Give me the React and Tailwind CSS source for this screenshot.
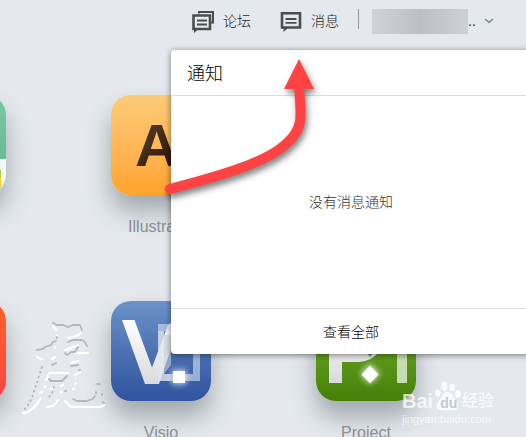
import React from 'react';

function ForumIcon() {
  return (
    <svg className="size-6" viewBox="0 0 24 24" fill="none" stroke="#4d4d4d" aria-hidden="true">
      <path d="M8 4.500V3h14v10.500h-2.500" strokeWidth="2" />
      <path d="M2.500 6.500h16.500v13.500H2.500z" strokeWidth="2.600" />
      <path d="M6 11.500h10M6 15.500h10" strokeWidth="1.800" />
      <path d="M3 20v4L7 20.500z" fill="#4d4d4d" stroke="none" />
    </svg>
  );
}

function MessageIcon() {
  return (
    <svg className="size-6" viewBox="0 0 24 24" fill="none" stroke="#4d4d4d" aria-hidden="true">
      <path d="M3 4.300h18v14.200H3z" strokeWidth="2.600" />
      <path d="M6.500 10h11M6.500 13.800h11" strokeWidth="1.800" />
      <path d="M4.500 18v5L9 19z" fill="#4d4d4d" stroke="none" />
    </svg>
  );
}

function NavLink({ icon, children }) {
  return (
    <a href="#" className="flex items-center gap-2 text-sm font-light text-[#222]">
      {icon}
      <span>{children}</span>
    </a>
  );
}

function Header() {
  return (
    <header className="flex h-[42px] items-center justify-end pr-8">
      <nav className="flex items-center gap-7">
        <NavLink icon={<ForumIcon />}>论坛</NavLink>
        <NavLink icon={<MessageIcon />}>消息</NavLink>
      </nav>
      <span className="mb-1 ml-[19px] mr-[13px] h-5 w-px bg-[#999]" />
      <button type="button" aria-label="账户" className="flex items-center">
        <span className="h-[25px] w-24 bg-linear-to-r from-[#d0d3d7] via-[#bcc0c4] to-[#cdd0d5]" />
        <span className="w-4 text-left text-sm leading-5 text-[#222]">..</span>
        <svg className="h-[6px] w-[10px]" viewBox="0 0 10 6" fill="none" stroke="#888e8e" strokeWidth="1.6" aria-hidden="true">
          <path d="M1 1l4 3.400L9 1" />
        </svg>
      </button>
    </header>
  );
}

function AppTile({ name, label, tone, children }) {
  return (
    <a href="#" aria-label={label} className="flex flex-col items-center gap-5">
      <span className={`block size-[100px] overflow-hidden rounded-[20px] bg-linear-to-b shadow-[0_16px_24px_rgba(70,78,84,0.42)] ${tone}`}>
        <svg className="block size-full" viewBox="0 0 100 100" aria-hidden="true">{children}</svg>
      </span>
      <span className="min-h-6 text-base leading-6 text-[#8b8d91]">{name}</span>
    </a>
  );
}

function AppGrid() {
  return (
    <main className="-ml-[94px] grid grid-cols-[repeat(3,100px)] gap-x-[105px] gap-y-[62px] pt-[53px]">
      <AppTile label="Numbers" tone="from-[#79c8a5] to-[#5bb589]">
        <rect y="64" width="100" height="36" fill="#f5f7f7" />
        <rect x="86" y="75" width="9" height="8" fill="#a6cf38" />
        <rect x="86" y="83" width="9" height="10" fill="#ffc425" />
      </AppTile>
      <AppTile name="Illustrator" tone="from-[#fdcb78] to-[#ffa32b]">
        <defs>
          <linearGradient id="brown" x1="0" y1="0" x2="1" y2="1">
            <stop offset="0.1" stopColor="#5b4130" />
            <stop offset="0.7" stopColor="#2c1604" />
          </linearGradient>
        </defs>
        <text x="24" y="71" fontSize="60" fontWeight="bold" fill="url(#brown)">Ai</text>
      </AppTile>
      <AppTile label="Photos" tone="from-[#7ea4d9] to-[#4468ad]" />
      <AppTile label="Keynote" tone="from-[#ff6126] to-[#ff4243]" />
      <AppTile name="Visio" tone="from-[#6c92c9] to-[#2f539e]">
        <defs>
          <linearGradient id="silver" x1="0" y1="0" x2="0" y2="1">
            <stop offset="0" stopColor="#fff" />
            <stop offset="1" stopColor="#dadada" />
          </linearGradient>
          <filter id="glow" x="-1" y="-1" width="3" height="3">
            <feGaussianBlur stdDeviation="3" />
          </filter>
        </defs>
        <path d="M11 19h12.500L41 66.500 57 24l7-5v17L48 83H34z" fill="url(#silver)" />
        <path d="M47 23h42v57H47zM53 30v43h29V30z" fill="#d9e2f2" fillOpacity="0.6" fillRule="evenodd" />
        <path d="M47 30v50h12v-7h-6V30z" fill="#e5e8ee" fillOpacity="0.5" />
        <path d="M53 34h7v30l-7 9z" fill="#c9d0dc" fillOpacity="0.6" />
        <rect x="61" y="69" width="14" height="14" fill="#fff" filter="url(#glow)" opacity="0.8" />
        <rect x="62" y="70" width="12" height="12" fill="#fff" />
      </AppTile>
      <AppTile name="Project" tone="from-[#79b82d] to-[#467f08]">
        <path d="M13 19h28c34 0 34 42-1 42H26v21H13z" fill="url(#silver)" />
        <path d="M81 35h10v47H81z" fill="#c6dcb1" />
        <path d="M49 49h10l-5 7z" fill="#777" />
        <path d="M54 63l10 10-10 10-10-10z" fill="#fff" filter="url(#glow)" opacity="0.8" />
        <path d="M54 64.500l8.500 9-8.500 9-8.500-9z" fill="#fff" />
      </AppTile>
    </main>
  );
}

function NotificationPanel() {
  return (
    <section className="absolute left-[171px] top-[50px] flex w-[360px] flex-col rounded-sm bg-white font-light shadow-[0_1px_6px_rgba(0,0,0,0.5)]">
      <h2 className="border-b border-[#ddd] px-4 pb-[7px] pt-[10px] text-lg leading-7 text-black">通知</h2>
      <p className="py-24 text-center text-sm leading-5 text-[#333]">没有消息通知</p>
      <button type="button" className="h-[46px] border-t border-[#ddd] text-sm text-black">查看全部</button>
    </section>
  );
}

function Arrow() {
  return (
    <svg className="pointer-events-none absolute left-[160px] top-[50px] h-[160px] w-[170px] drop-shadow-[2px_4px_3px_rgba(0,0,0,0.5)]" viewBox="0 0 170 160" aria-hidden="true">
      <path d="M10 139C60 126 108 112 127 93C146 76 140 62 139 35" fill="none" stroke="#ff4343" strokeWidth="10" strokeLinecap="round" />
      <path d="M139 9l15 30h-30z" fill="#ff4343" />
    </svg>
  );
}

function BrushMark() {
  return (
    <svg className="pointer-events-none absolute left-[20px] top-[320px] h-[100px] w-[90px]" viewBox="0 0 90 100" fill="none" strokeLinecap="round" aria-hidden="true">
      <g stroke="#fff" strokeWidth="2.200">
        <path d="M33 6l3 4M37 15v1M48 18l9-2 4-3M45 30l6-2 7-3M47 34l5-3M56 33h12M17 37l4 2h1M32 39l3-2M35 27v1M51 43l7-2M29 53h19M55 55l5-3M28 55l-1 4-1 1M56 63l-1 1M54 69h-1M25 66v1M22 72l-2 1" />
        <path d="M20 79l-3 5-4 4-5 4-5 1M34 68l-3 1M43 65l-2 1M41 72v1M38 80l-2 3-3 3-6 1M45 81l6 6h30l3-2" />
      </g>
      <g stroke="#b4b8bb" strokeWidth="1.800">
        <path d="M33 3l4 2h6l5 2 5-2h7l2 5M17 30l6-1 2-2 6-2 2-3 3-1M48 22l5-2h9l3 2 2 4M45 33l2 2 4-3h4l3-5M32 45l4-2M51 46l7-1M59 50h1M29 59l2 2h11l5-5M53 79l4 2h9l7-2 2-3" />
        <path d="M22 47l-3 9-2 7-3 8-2 7-5 9-4 4M34 67l-2 6-5 7" strokeDasharray="1 4" />
        <path d="M45 71h1M76 73v-1M77 64h3M82 74v1M83 82l1 1M37 17v1" />
      </g>
    </svg>
  );
}

function Watermark() {
  return (
    <div className="pointer-events-none absolute right-8 top-[385px] w-[92px] text-white/75">
      <div className="flex items-center gap-px">
        <span className="text-xl font-bold leading-8">Bai</span>
        <span className="relative -mt-3 h-8 w-7">
          <svg className="absolute inset-0 size-full" viewBox="0 0 28 32" fill="currentColor" aria-hidden="true">
            <ellipse cx="4" cy="14" rx="3" ry="4" />
            <ellipse cx="11" cy="7" rx="3" ry="5" />
            <ellipse cx="19" cy="8" rx="3" ry="4" />
            <ellipse cx="25" cy="15" rx="3" ry="4" />
            <path d="M14 13c5 0 6 6 9 9 4 5 2 10-3 10H8c-6 0-7-6-3-10 4-3 4-9 9-9z" />
          </svg>
          <span className="absolute bottom-0 left-[6px] text-sm font-bold leading-4 text-[#c5c9cd]">du</span>
        </span>
        <span className="whitespace-nowrap text-base font-medium leading-8">经验</span>
      </div>
      <div className="-mt-1 text-[11px] leading-3">jingyan.baidu.com</div>
    </div>
  );
}

export default function App() {
  return (
    <div className="relative h-screen overflow-hidden bg-[#e5e9ee] font-['Liberation_Sans','Noto_Sans_CJK_SC',sans-serif]">
      <Header />
      <AppGrid />
      <NotificationPanel />
      <Arrow />
      <BrushMark />
      <Watermark />
    </div>
  );
}
